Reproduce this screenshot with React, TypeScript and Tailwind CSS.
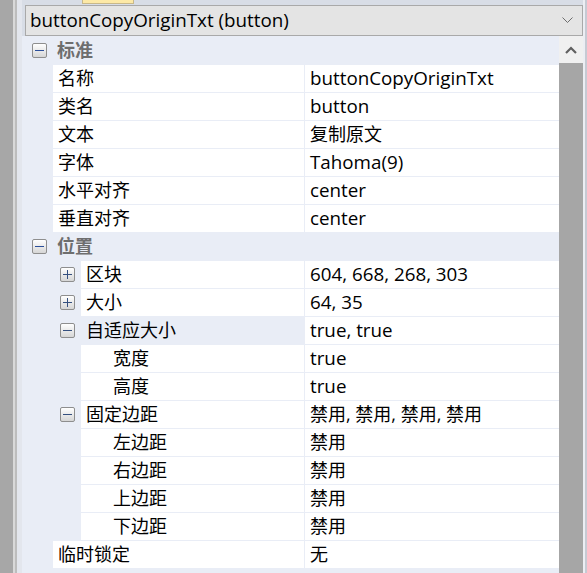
import React from "react";

const FONT = "font-['Open_Sans','Noto_Sans_CJK_SC',sans-serif]";

function T({ s }: { s: string }) {
  const latin = /^[\x00-\x7F]+$/.test(s);
  return <span className={latin ? "text-[18.8px]" : "text-[18px]"}>{s}</span>;
}

function Box({ open, cat }: { open: boolean; cat?: boolean }) {
  return (
    <div className="relative w-[15px] h-[15px] border border-[#8e8e8e] rounded-[2px] bg-linear-to-b from-white to-[#d6d6d6] flex items-center justify-center">
      <div className={`w-[9px] h-[1px] ${cat ? "bg-[#2c4f9a]" : "bg-[#35507f]"}`} />
      {!open && <div className="absolute w-[1px] h-[9px] bg-[#35507f]" />}
    </div>
  );
}

type Row = {
  name: string;
  value: string;
  level: 0 | 1 | 2;
  box?: "open" | "closed";
  hl?: boolean;
};

function DataRow({ r }: { r: Row }) {
  return (
    <div className="flex h-[27px] mt-px">
      <div className="w-[279px] flex shrink-0">
        <div className="w-[28px] shrink-0" />
        {r.level >= 1 && (
          <div className="w-[28px] shrink-0 flex items-center pl-[7px]">
            {r.box && <Box open={r.box === "open"} />}
          </div>
        )}
        <div
          className={`flex-1 flex items-center whitespace-nowrap ${r.hl ? "bg-[#e9edf6]" : "bg-white"} ${r.level === 2 ? "pl-[32px]" : "pl-[5px]"}`}
        >
          <T s={r.name} />
        </div>
      </div>
      <div className="ml-px flex-1 bg-white flex items-center pl-[5px] whitespace-nowrap">
        <T s={r.value} />
      </div>
    </div>
  );
}

function CatRow({ name }: { name: string }) {
  return (
    <div className="flex h-[28px] items-center">
      <div className="w-[32px] shrink-0 flex items-center pl-[7px]">
        <Box open cat />
      </div>
      <div className="font-bold text-[#6e6e6e]">{name}</div>
    </div>
  );
}

const std: Row[] = [
  { name: "名称", value: "buttonCopyOriginTxt", level: 0 },
  { name: "类名", value: "button", level: 0 },
  { name: "文本", value: "复制原文", level: 0 },
  { name: "字体", value: "Tahoma(9)", level: 0 },
  { name: "水平对齐", value: "center", level: 0 },
  { name: "垂直对齐", value: "center", level: 0 },
];

const pos: Row[] = [
  { name: "区块", value: "604, 668, 268, 303", level: 1, box: "closed" },
  { name: "大小", value: "64, 35", level: 1, box: "closed" },
  { name: "自适应大小", value: "true, true", level: 1, box: "open", hl: true },
  { name: "宽度", value: "true", level: 2 },
  { name: "高度", value: "true", level: 2 },
  { name: "固定边距", value: "禁用, 禁用, 禁用, 禁用", level: 1, box: "open" },
  { name: "左边距", value: "禁用", level: 2 },
  { name: "右边距", value: "禁用", level: 2 },
  { name: "上边距", value: "禁用", level: 2 },
  { name: "下边距", value: "禁用", level: 2 },
  { name: "临时锁定", value: "无", level: 0 },
];

export default function App() {
  return (
    <div className={`w-[587px] h-[573px] flex overflow-hidden text-[18px] text-black ${FONT}`}>
      {/* left frame strips */}
      <div className="w-[13px] bg-[#a7a7a7] shrink-0" />
      <div className="w-[2px] bg-[#d9d9d9] shrink-0" />
      <div className="w-[2px] bg-[#bdbdbd] shrink-0" />
      <div className="w-[5px] bg-[#e3e6ed] shrink-0" />

      <div className="flex-1 flex flex-col min-w-0">
        {/* top strip with tab */}
        <div className="h-[5px] bg-[#d8dde6] relative shrink-0">
          <div className="absolute left-[60px] top-0 w-[52px] h-[4px] bg-[#fde9a6] border-x border-b border-[#c8b88a]" />
        </div>
        <div className="flex shrink-0 bg-[#d8dde6]">
          <div className="w-[3px]" />
          {/* combo */}
          <div className="h-[31px] flex-1 border border-[#a9a9a9] bg-[#e4e4e4] flex items-center pl-[4px] pr-[8px]">
            <span className="flex-1 whitespace-nowrap text-[18.8px]">buttonCopyOriginTxt (button)</span>
            <svg width="11" height="7" viewBox="0 0 11 7" className="mr-[1px]">
              <polyline points="0.5,0.5 5.5,5.5 10.5,0.5" fill="none" stroke="#6d6d6d" strokeWidth="1" />
            </svg>
          </div>
        </div>

        {/* grid + scrollbar */}
        <div className="flex-1 flex min-h-0">
          <div className="w-[537px] bg-[#e9edf6] flex flex-col pl-[3px]">
            <CatRow name="标准" />
            {std.map((r) => (
              <DataRow key={r.name} r={r} />
            ))}
            <CatRow name="位置" />
            {pos.map((r) => (
              <DataRow key={r.name} r={r} />
            ))}
          </div>
          <div className="w-[24px] flex flex-col shrink-0">
            <div className="h-[27px] bg-[#f0f0f0] flex items-center justify-center">
              <svg width="12" height="8" viewBox="0 0 12 8">
                <polyline points="1,7 6,2 11,7" fill="none" stroke="#606060" strokeWidth="2.2" />
              </svg>
            </div>
            <div className="flex-1 bg-[#a6a6a6]" />
          </div>
        </div>
      </div>

      {/* right frame */}
      <div className="w-[2px] bg-[#eceef3] shrink-0" />
      <div className="w-[2px] bg-[#c6cad3] shrink-0" />
    </div>
  );
}
